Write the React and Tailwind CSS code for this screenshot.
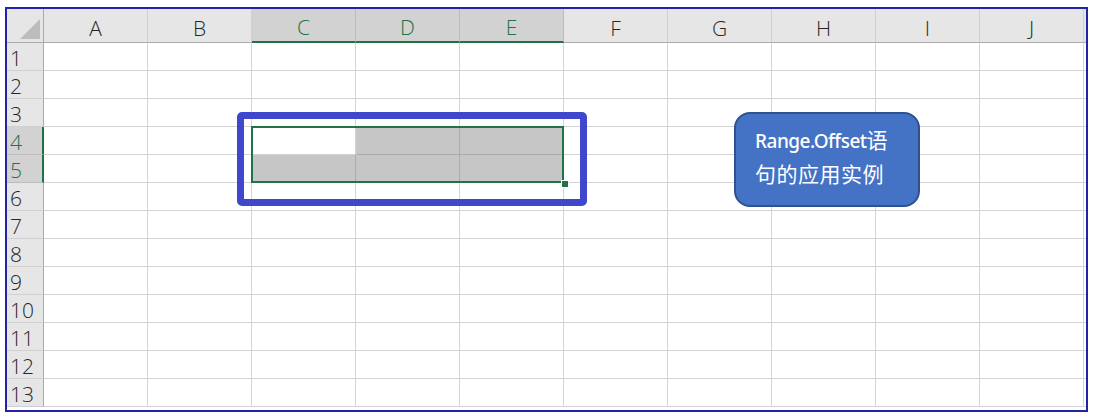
import React from 'react'

const cols = ['A', 'B', 'C', 'D', 'E', 'F', 'G', 'H', 'I', 'J']
const rows = [1, 2, 3, 4, 5, 6, 7, 8, 9, 10, 11, 12, 13]
const selCols = ['C', 'D', 'E']
const selRows = [4, 5]

const font = { fontFamily: '"Open Sans", "Noto Sans", sans-serif' }

const Cell = ({ col, row }) => {
  const inSel = selCols.includes(col) && selRows.includes(row)
  const active = col === 'C' && row === 4
  const shaded = inSel && !active
  return (
    <div
      className={
        'border-r border-b ' +
        (shaded ? 'bg-[#c6c6c6] border-[#ababab]' : 'bg-white border-[#d4d4d4]')
      }
    />
  )
}

export default function App() {
  return (
    <div className="relative w-[1093px] h-[420px] bg-white pt-[7px] pl-[5px]" style={font}>
      <div className="w-[1083px] h-[405px] border-2 border-[#2323a8] overflow-hidden">
        <div className="grid grid-cols-[37px_repeat(10,104px)_1fr] grid-rows-[34px_repeat(13,28px)]">
          {/* corner */}
          <div className="relative bg-[#e6e6e6] border-r border-b border-[#ababab]">
            <svg className="absolute left-[13px] top-[10px]" width="20" height="20" viewBox="0 0 20 20">
              <polygon points="20,0 20,20 0,20" fill="#bcbcbc" />
            </svg>
          </div>
          {cols.map(c => {
            const sel = selCols.includes(c)
            return (
              <div
                key={c}
                className={
                  'flex items-end justify-center pb-[3px] text-[21px] leading-none font-light border-r ' +
                  (sel
                    ? 'bg-[#d2d2d2] text-[#217346] border-r-[#bdbdbd] border-b-2 border-b-[#217346]'
                    : 'bg-[#e6e6e6] text-[#262626] border-r-[#d0d0d0] border-b border-b-[#ababab]')
                }
              >
                <span>{c}</span>
              </div>
            )
          })}
          <div className="bg-[#e6e6e6] border-b border-[#ababab]" />
          {rows.map(r => {
            const sel = selRows.includes(r)
            return (
              <React.Fragment key={r}>
                <div
                  className={
                    'flex items-center pl-[3px] pt-[3px] text-[21px] leading-none font-light border-b ' +
                    (sel
                      ? 'bg-[#d2d2d2] text-[#217346] border-b-[#bdbdbd] border-r-2 border-r-[#217346]'
                      : 'bg-[#e6e6e6] text-[#262626] border-b-[#d0d0d0] border-r border-r-[#ababab]')
                  }
                >
                  {r}
                </div>
                {cols.map(c => (
                  <Cell key={c} col={c} row={r} />
                ))}
                <div className="border-b border-[#d4d4d4]" />
              </React.Fragment>
            )
          })}
        </div>
      </div>

      {/* selection border C4:E5 */}
      <div className="absolute left-[251px] top-[126px] w-[313px] h-[57px] border-2 border-[#217346]" />
      <div className="absolute left-[561px] top-[180px] w-[6px] h-[6px] bg-[#217346] border border-white box-content" />

      {/* blue highlight frame */}
      <div className="absolute left-[237px] top-[112px] w-[350px] h-[94px] border-[7px] border-[#3f48cc] rounded-[5px]" />

      {/* callout */}
      <div className="absolute left-[734px] top-[112px] w-[186px] h-[95px] bg-[#4472c4] border-2 border-[#2f528f] rounded-[16px] pl-[19px] pt-[9px] text-white text-[19px] leading-[32px]">
        <div style={{ fontFamily: '"Noto Sans", "Noto Sans CJK SC", sans-serif' }} className="tracking-[-0.5px] font-medium">
          Range.Offset<span style={{ fontFamily: '"Noto Sans CJK SC", sans-serif' }} className="tracking-normal font-normal text-[21px]">语</span>
        </div>
        <div style={{ fontFamily: '"Noto Sans CJK SC", sans-serif' }} className="text-[21px] tracking-[0.5px]">
          句的应用实例
        </div>
      </div>
    </div>
  )
}
